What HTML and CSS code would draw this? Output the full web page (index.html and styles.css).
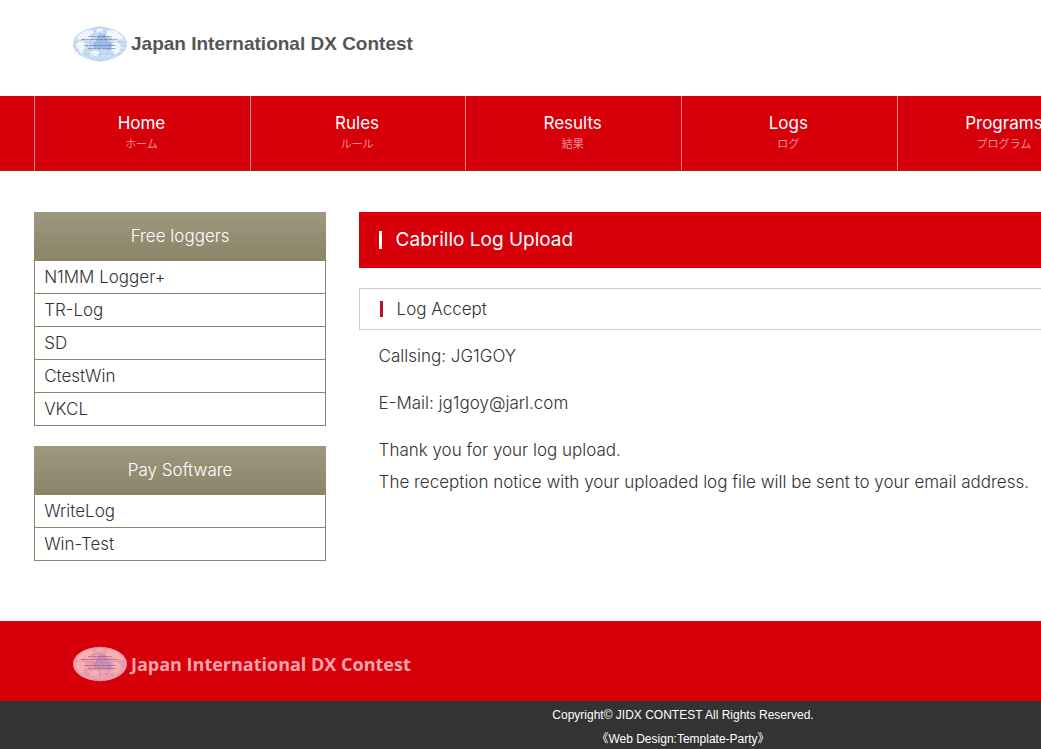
FILE: index.html
```html
<!DOCTYPE html>
<html lang="ja">
<head>
<meta charset="utf-8">
<title>Japan International DX Contest</title>
<link rel="stylesheet" href="styles.css">
</head>
<body>
<svg class="defs" aria-hidden="true">
  <symbol id="globe" viewBox="0 0 56 36">
    <ellipse class="sea" cx="28" cy="18" rx="27" ry="17"/>
    <path class="grid" d="M7 8H49M3 12H53M1 16H55M1 20H55M3 24H53M7 28H49M28 1V35M28 1C15 8 15 28 28 35M28 1C41 8 41 28 28 35M28 1C3 5 3 31 28 35M28 1C53 5 53 31 28 35"/>
    <path class="land" d="M7 9L13 5L20 4L22 7L18 9L20 12L16 14L13 12L9 14L5 13ZM6 16L11 15L14 19L12 24L10 29L7 24L4 20ZM24 3L31 2L30 5L26 6ZM36 4L44 5L50 10L52 14L47 13L44 16L40 12L36 11L34 8ZM39 17L46 16L49 20L47 26L43 29L40 24ZM18 26L24 24L28 27L24 30L19 29Z"/>
    <path class="deep" d="M27 9L33 8L36 15L41 18L38 24L31 22L23 23L20 18L24 15Z"/>
    <path class="ink" d="M16 10.500H40M9 13.500H46M12 19.500H44M16 22.500H44"/>
  </symbol>
</svg>
<div class="page">
  <header class="header">
    <a class="logo" href="#"><svg class="globe"><use href="#globe"/></svg><span>Japan International DX Contest</span></a>
  </header>
  <nav class="nav">
    <ul class="inner menu">
      <li><a href="#">Home<small>ホーム</small></a></li>
      <li><a href="#">Rules<small>ルール</small></a></li>
      <li><a href="#">Results<small>結果</small></a></li>
      <li><a href="#">Logs<small>ログ</small></a></li>
      <li><a href="#">Programs<small>プログラム</small></a></li>
    </ul>
  </nav>
  <div class="inner contents">
    <aside class="side">
      <section class="box">
        <h2>Free loggers</h2>
        <ul>
          <li><a href="#">N1MM Logger+</a></li>
          <li><a href="#">TR-Log</a></li>
          <li><a href="#">SD</a></li>
          <li><a href="#">CtestWin</a></li>
          <li><a href="#">VKCL</a></li>
        </ul>
      </section>
      <section class="box">
        <h2>Pay Software</h2>
        <ul>
          <li><a href="#">WriteLog</a></li>
          <li><a href="#">Win-Test</a></li>
        </ul>
      </section>
    </aside>
    <main class="main">
      <h1><span>Cabrillo Log Upload</span></h1>
      <h3><span>Log Accept</span></h3>
      <p>Callsing: JG1GOY</p>
      <p>E-Mail: jg1goy@jarl.com</p>
      <p>Thank you for your log upload.<br>The reception notice with your uploaded log file will be sent to your email address.</p>
    </main>
  </div>
  <footer>
    <div class="brand">
      <a class="logo" href="#"><svg class="globe"><use href="#globe"/></svg><span>Japan International DX Contest</span></a>
    </div>
    <div class="copyright">
      <small>Copyright© JIDX CONTEST All Rights Reserved.</small>
      <small><a href="#">《Web Design:Template-Party》</a></small>
    </div>
  </footer>
</div>
</body>
</html>
```
FILE: styles.css
```css
* {
  box-sizing: border-box;
}

html {
  overflow-x: hidden;
}

body {
  margin: 0;
  background: #fff;
  color: #333;
  font-family: Inter, "Noto Sans CJK JP", sans-serif;
  font-size: 17px;
  font-weight: 300;
  line-height: 32px;
}

a {
  color: inherit;
  text-decoration: none;
}

ul,
h1,
h2,
h3,
p {
  margin: 0;
  padding: 0;
  font-weight: inherit;
  list-style: none;
}

.defs {
  position: absolute;
  width: 0;
  height: 0;
}

.page {
  min-width: 1366px;
}

.inner {
  width: 95%;
  margin: 0 auto;
}

/* Logo */
.header {
  padding: 26px 72px 34px;
}

.logo {
  display: flex;
  align-items: center;
  gap: 3px;
  height: 36px;
  color: #555;
  font-family: "Liberation Sans", sans-serif;
  font-size: 19px;
  font-weight: bold;
}

.globe {
  --sea: #cfe0f5;
  --grid: #a3c2ea;
  --land: #f6faff;
  --deep: #8fb4e6;
  --ink: #68708c;
  width: 56px;
  height: 36px;
}

.sea {
  fill: var(--sea);
}

.grid {
  fill: none;
  stroke: var(--grid);
  stroke-width: 0.7;
}

.land {
  fill: var(--land);
  opacity: 0.85;
}

.deep {
  fill: var(--deep);
  opacity: 0.8;
}

.ink {
  fill: none;
  stroke: var(--ink);
  stroke-width: 0.6;
  stroke-dasharray: 4 0.6;
}

/* Navigation */
.nav {
  background: #d7000a;
  border-bottom: 1px solid #a8202c;
}

.menu {
  display: grid;
  grid-template-columns: repeat(6, 1fr);
  padding-right: 4px;
}

.menu li {
  border-left: 1px solid #ee868a;
}

.menu a {
  display: block;
  padding: 16px 2px 16px 0;
  color: #fff;
  font-weight: 400;
  line-height: 22px;
  text-align: center;
}

.menu small {
  display: block;
  color: #f08d92;
  font-size: 11px;
  line-height: 20px;
}

/* Columns */
.contents {
  display: flex;
  justify-content: space-between;
  padding: 41px 0 40px;
}

.side {
  width: 22.5%;
}

.main {
  width: 75%;
}

.box {
  margin-bottom: 20px;
  border: 1px solid #8c846f;
  border-top: 0;
}

.box h2 {
  margin: 0 -1px;
  background: linear-gradient(#9d987f, #8a8468);
  color: #fff;
  font-size: 17px;
  line-height: 49px;
  text-align: center;
}

.box li + li {
  border-top: 1px solid #8c846f;
}

.box a {
  display: block;
  padding-left: 9px;
}

.main h1 {
  margin-bottom: 20px;
  padding: 19px 20px;
  background: #d7000a;
  color: #fff;
  font-size: 19px;
  font-weight: 400;
  line-height: 18px;
}

.main h1 span,
.main h3 span {
  display: block;
  padding-left: 14px;
  border-left: 3px solid #fff;
}

.main h3 {
  margin-bottom: 10px;
  padding: 12px 20px;
  border: 1px solid #ccc;
  font-size: 17px;
  line-height: 16px;
}

.main h3 span {
  border-left-color: #b5142a;
}

.main p {
  padding: 0 20px 15px;
}

/* Footer */
.brand {
  padding: 25px 72px 19px;
  background: #d7000a;
}

.brand .logo {
  color: #f9a5a9;
  font-family: "Open Sans", sans-serif;
  font-size: 18px;
}

.brand .globe {
  --sea: #f0a2ae;
  --grid: #d08fae;
  --land: #fbb3b3;
  --deep: #bd8bb6;
  --ink: #a34d6c;
}

.copyright {
  padding-top: 2px;
  background: #333;
  color: #fff;
  font-family: "Liberation Sans", "Noto Sans CJK JP", sans-serif;
  font-weight: 400;
  text-align: center;
}

.copyright small {
  display: block;
  font-size: 12px;
  line-height: 24px;
}
```
